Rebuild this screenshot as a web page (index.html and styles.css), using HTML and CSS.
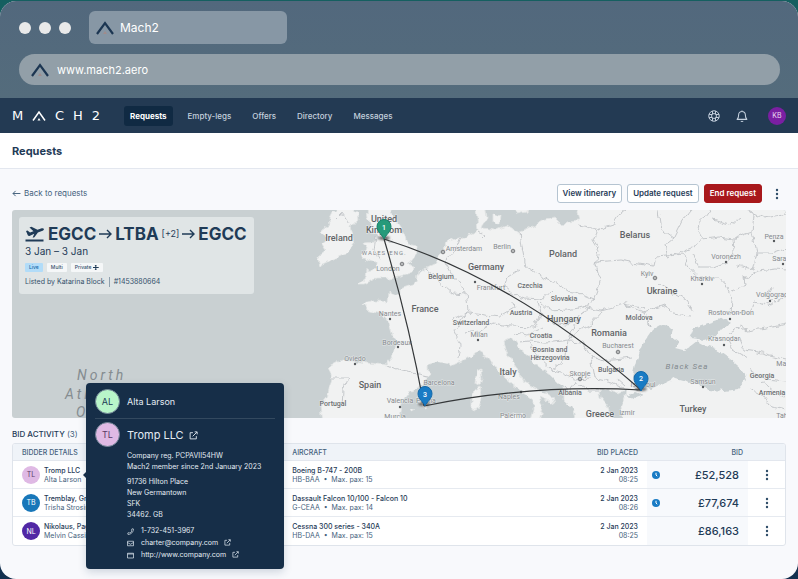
FILE: index.html
```html
<!DOCTYPE html>
<html lang="en">
<head>
<meta charset="utf-8">
<meta name="viewport" content="width=device-width, initial-scale=1">
<title>Mach2 – Requests</title>
<link rel="stylesheet" href="styles.css">
</head>
<body>
<svg class="defs" aria-hidden="true">
  <symbol id="mark" viewBox="0 0 18 14"><path d="M1 13 9 2l8 11" fill="none" stroke="#1c3652" stroke-width="2.2"/><path d="M7 13l2-3 2 3z" fill="#a08c8c"/></symbol>
  <symbol id="external" viewBox="0 0 16 16"><path d="M7 3H2v11h11V9M10 1.500h4.500V6M14 2 6.500 9.500" fill="none" stroke="currentColor" stroke-width="1.600"/></symbol>
  <symbol id="dots" viewBox="0 0 4 14"><circle cx="2" cy="3" r="1.200"/><circle cx="2" cy="7" r="1.200"/><circle cx="2" cy="11" r="1.200"/></symbol>
  <symbol id="clock" viewBox="0 0 16 16"><circle cx="8" cy="8" r="8" fill="#197bc4"/><path d="M8 3.500V8l2.500 2.500" fill="none" stroke="#fff" stroke-width="2"/></symbol>
</svg>
<div class="window">
  <header class="chrome">
    <div class="tabs">
      <div class="lights"><i></i><i></i><i></i></div>
      <div class="tab"><svg><use href="#mark"/></svg><span>Mach2</span></div>
    </div>
    <div class="address"><svg><use href="#mark"/></svg><span>www.mach2.aero</span></div>
  </header>

  <nav class="nav">
    <a class="logo" href="#" aria-label="Mach2"><span>M</span><svg viewBox="0 0 14 10"><path d="M1 9.500 7 1l6 8.500" fill="none" stroke="#fff" stroke-width="1.500"/><path d="M5.500 9.500 7 7l1.500 2.500z" fill="#fff"/></svg><span>C</span><span>H</span><span>2</span></a>
    <div class="links">
      <a class="active" href="#">Requests</a><a href="#">Empty-legs</a><a href="#">Offers</a><a href="#">Directory</a><a href="#">Messages</a>
    </div>
    <div class="tools">
      <button aria-label="Help"><svg viewBox="0 0 16 16"><g fill="none" stroke="currentColor" stroke-width="1.300"><circle cx="8" cy="8" r="7"/><circle cx="8" cy="8" r="3.300"/><path d="M6 1.500v4M10 1.500v4M6 10.500v4M10 10.500v4M1.500 6h4M1.500 10h4M10.500 6h4M10.500 10h4"/></g></svg></button>
      <button aria-label="Notifications"><svg viewBox="0 0 16 16"><g fill="none" stroke="currentColor" stroke-width="1.400" stroke-linejoin="round"><path d="M1.500 12.500C3.500 10.500 3.500 9 3.500 6.500a4.500 4.500 0 0 1 9 0c0 2.500 0 4 2 6zM8 2V.500M6.500 14.500c.500 1 2.500 1 3 0"/></g></svg></button>
      <button class="user">KB</button>
    </div>
  </nav>

  <div class="title"><h1>Requests</h1></div>

  <main>
    <div class="actions">
      <a class="back" href="#"><svg viewBox="0 0 10 8"><path d="M9.500 4H1M4 1 1 4l3 3" fill="none" stroke="currentColor" stroke-width="1.100"/></svg>Back to requests</a>
      <button>View itinerary</button>
      <button>Update request</button>
      <button class="danger">End request</button>
      <button class="more" aria-label="More actions"><svg><use href="#dots"/></svg></button>
    </div>

    <section class="map">
      <svg class="canvas" viewBox="12 210 774 208" role="img" aria-label="Route map">
        <defs>
          <filter id="rough" x="-5%" y="-5%" width="110%" height="110%" color-interpolation-filters="sRGB"><feTurbulence type="fractalNoise" baseFrequency=".13" numOctaves="2" seed="4"/><feDisplacementMap in="SourceGraphic" scale="7" xChannelSelector="R" yChannelSelector="G"/></filter>
          <filter id="smudge"><feGaussianBlur stdDeviation="1.200"/></filter>
          <g id="pin"><path d="M0 0C-1.500-4-7-7-7-12.500a7 7 0 0 1 14 0C7-7 1.500-4 0 0z"/></g>
        </defs>
        <g filter="url(#rough)">
          <g fill="#f1f2f2" stroke="#e2e5e5" stroke-width=".8">
            <path d="M332 212 343 206 357 212 358 219 350 228 354 242 347 254 332 260 320 265 317 257 326 250 322 244 327 240 321 231 330 225 329 218z"/>
            <path d="M366 202 368 218 371 225 366 232 377 234 376 241 364 242 369 249 362 254 364 259 377 263 377 268 367 270 366 277 358 284 363 284 376 278 388 278 400 276 413 272 414 267 407 265 417 253 417 246 407 244 404 233 396 221 390 211 390 202z"/>
            <path d="M475 202 477 218 478 230 471 234 460 238 447 241 443 252 434 264 425 268 416 275 415 283 400 288 400 296 389 292 388 302 376 301 363 304 367 309 381 313 388 322 391 332 396 343 392 358 387 365 376 364 361 362 341 360 328 367 332 378 327 397 321 404 323 425 399 425 402 403 407 393 423 385 429 376 428 366 437 362 451 366 466 359 478 351 488 357 497 370 512 383 523 392 533 400 533 408 529 425 538 425 543 405 540 397 555 404 553 397 540 390 524 382 516 366 506 352 503 341 511 337 518 347 534 362 551 375 563 387 563 399 572 408 578 425 614 425 608 408 600 398 599 392 608 389 618 393 626 390 625 396 621 405 623 425 795 425 795 202 580 202 578 213 580 221 566 222 562 226 554 218 541 221 528 229 518 233 507 226 496 230 482 228 486 218 484 202z"/>
            <path d="M477 371 481 369 482 378 480 386 475 383zM474 390 481 387 483 394 479 407 472 410 472 398zM493 213 500 216 499 224 493 221zM512 202 529 202 526 212 517 214zM411 408 415 410 411 412zM420 400 427 401 425 407 420 405zM502 415 523 413 525 425 504 425z"/>
          </g>
          <g fill="#c9d0d2">
            <path d="M640 387 633 377 637 360 644 343 653 330 660 326 673 329 671 336 679 342 676 349 684 351 697 341 706 346 718 350 729 358 743 370 747 380 739 389 726 391 709 390 694 383 675 378 660 385 650 390z"/>
            <path d="M690 338 694 328 708 323 728 317 731 324 721 329 714 337 705 340zM626 395 634 392 643 396 634 399z"/>
          </g>
          <g fill="none" stroke="#bfc3c6" stroke-width=".9">
            <path d="M335 220 342 213 350 224M376 236 374 250 380 260M385 238 393 242M461 238 456 250 445 262 452 275 460 284 466 293 468 310 461 320 454 330 461 345 459 358M425 268 435 277 445 286 453 293 466 294M388 365 402 371 428 376M332 378 348 378 343 390 342 405M479 231 485 235 482 238M520 232 522 247 526 266 539 275 554 282 567 291 580 293 594 299 601 280 596 265 599 250 593 240 596 228 578 224"/>
            <path d="M520 270 507 278 504 287 515 296 525 299 541 300 552 290M454 320 468 313 485 315 500 317 515 308 514 301M464 333 480 331 493 323 511 326 534 327 541 313 538 303M541 303 550 311 568 310 584 307 594 299M541 313 552 322 565 324 577 321 586 307 602 310 624 304 643 313 651 326M513 333 528 335 542 328M519 342 530 341 546 343 569 340 572 330 577 321M530 343 538 357 552 370 564 360 568 341M568 341 582 342 591 357 604 361 633 358M591 357 595 378 612 382 624 388M552 370 564 373 574 379 591 378M564 387 570 394 575 382 588 391 599 391"/>
            <path d="M597 230 613 225 620 213 628 207M596 262 620 260 654 266 656 257 684 254 687 265 699 278 719 278 727 287 732 299 731 315M659 210 662 230 673 238 664 245 667 258M673 238 682 220 690 210M667 258 692 247 703 239 696 226 706 217 713 207M703 239 720 237 733 239 734 252 727 262 713 267 699 267 692 254M733 239 752 232 754 215 742 207M752 232 757 253 772 253 786 248M757 253 753 270 738 266M745 278 758 271 775 269 786 270M732 291 746 286 745 276M729 313 748 313 756 301 770 306 786 296M713 220 729 225 740 217M751 212 765 218 786 214M729 333 740 326 746 331 766 328 786 323M739 338 744 350 758 352 786 359M643 313 665 305 672 314 690 316M651 326 645 309 624 304M660 285 675 294 686 300 693 310M748 370 765 379 786 381M751 389 765 397 772 407 786 410M641 390 629 387M604 310 590 325 580 330 569 340M617 379 625 386M762 382 774 392 786 398M728 340 733 350 747 358M771 287 767 296 775 303"/>
          </g>
        </g>
        <g class="dots-map">
          <circle cx="390" cy="319" r="1.200"/><circle cx="398" cy="347" r="1.200"/><circle cx="355" cy="364" r="1.200"/><circle cx="400" cy="407" r="1.200"/><circle cx="478" cy="340" r="1.200"/><circle cx="475" cy="282" r="1.200"/><circle cx="726" cy="262" r="1.200"/><circle cx="702" cy="284" r="1.200"/><circle cx="774" cy="241" r="1.200"/><circle cx="783" cy="264" r="1.200"/><circle cx="770" cy="301" r="1.200"/><circle cx="730" cy="319" r="1.200"/><circle cx="724" cy="345" r="1.200"/><circle cx="703" cy="387" r="1.200"/><circle cx="521" cy="392" r="1.200"/>
          <g class="capital"><circle cx="402" cy="264" r="1.800"/><circle cx="443" cy="252" r="1.800"/><circle cx="513" cy="251" r="1.800"/><circle cx="655" cy="278" r="1.800"/><circle cx="618" cy="352" r="1.800"/><circle cx="580" cy="379" r="1.800"/></g>
          <circle cx="402" cy="264" r=".7"/><circle cx="443" cy="252" r=".7"/><circle cx="513" cy="251" r=".7"/><circle cx="655" cy="278" r=".7"/><circle cx="618" cy="352" r=".7"/><circle cx="580" cy="379" r=".7"/>
        </g>
        <g class="country">
          <text x="384" y="222">United</text><text x="384" y="233">Kingdom</text><text x="339" y="241">Ireland</text><text x="486" y="270">Germany</text><text x="563" y="257">Poland</text><text x="635" y="238">Belarus</text><text x="662" y="294">Ukraine</text><text x="425" y="312">France</text><text x="564" y="322">Hungary</text><text x="609" y="336">Romania</text><text x="508" y="375">Italy</text><text x="370" y="388">Spain</text><text x="600" y="417">Greece</text><text x="693" y="412">Turkey</text>
        </g>
        <g class="small-country">
          <text x="441" y="279">Belgium</text><text x="530" y="288">Czechia</text><text x="564" y="301">Slovakia</text><text x="521" y="315">Austria</text><text x="471" y="325">Switzerland</text><text x="541" y="338">Croatia</text><text x="550" y="352">Bosnia and</text><text x="550" y="360">Herzegovina</text><text x="639" y="320">Moldova</text><text x="611" y="372">Bulgaria</text><text x="570" y="395">Albania</text><text x="333" y="406">Portugal</text><text x="762" y="378">Georgia</text><text x="772" y="395">Armenia</text>
        </g>
        <g class="city">
          <text x="388" y="271">London</text><text x="464" y="251">Amsterdam</text><text x="502" y="249">Berlin</text><text x="491" y="290">Frankfurt</text><text x="390" y="316">Nantes</text><text x="397" y="345">Bordeaux</text><text x="355" y="361">Oviedo</text><text x="400" y="403">Valencia</text><text x="426" y="403">Palma</text><text x="439" y="385">Barcelona</text><text x="479" y="337">Milan</text><text x="509" y="399">Naples</text><text x="513" y="418">Palermo</text><text x="395" y="419">Murcia</text><text x="647" y="276">Kyiv</text><text x="702" y="281">Kharkiv</text><text x="726" y="259">Voronezh</text><text x="774" y="239">Penza</text><text x="784" y="261">Saratov</text><text x="772" y="297">Volgograd</text><text x="731" y="315">Rostov-on-Don</text><text x="724" y="341">Krasnodar</text><text x="618" y="348">Bucharest</text><text x="580" y="376">Skopje</text><text x="643" y="387">Istanbul</text><text x="703" y="384">Samsun</text><text x="627" y="415">Izmir</text><text x="785" y="366">Makh</text><text x="782" y="418">Tab</text>
          <text class="region" x="374" y="255">WALES</text><text class="region" x="398" y="255">ENG.</text>
        </g>
        <text class="sea" x="687" y="369">Black Sea</text>
        <g class="ocean"><text x="77" y="380">North</text><text x="65" y="399">Atlantic</text><text x="76" y="417">Ocean</text></g>
        <g fill="#444b" filter="url(#smudge)"><ellipse cx="384" cy="238" rx="6" ry="2"/><ellipse cx="424" cy="404" rx="6" ry="2"/><ellipse cx="641" cy="389" rx="6" ry="2"/></g>
        <path d="M384 239Q409 323 424 406M384 239Q517 281 641 390M424 406Q532 384 641 390" fill="none" stroke="#343739" stroke-width="1.200"/>
        <g class="pins">
          <use href="#pin" x="384" y="239" fill="#269a7a" stroke="#17806a"/><use href="#pin" x="425" y="406" fill="#197bc4" stroke="#1268aa"/><use href="#pin" x="641" y="391" fill="#197bc4" stroke="#1268aa"/>
          <text x="384" y="230">1</text><text x="425" y="397">3</text><text x="641" y="381">2</text>
        </g>
      </svg>
      <div class="itinerary">
        <h2>
          <svg class="plane" viewBox="0 0 19 16"><path d="M.500 13.500h18v2H.500zM1 5l1.500-.500 2.500 2 3.500-1.300L4.500 1.500 6.500.800l6 3 3.500-1.300c1.500-.500 2.700-.300 2.900.500.200.9-.7 1.600-2 2.100l-4 1.500-3.500 4.600-1.800.6 1.700-4L5 9.800c-1 .400-1.700.2-2.200-.5z" fill="#1f3b57"/></svg>
          <span>EGCC</span><svg class="arrow" viewBox="0 0 13 10"><path d="M0 5h12M8 1l4 4-4 4" fill="none" stroke="#1f3b57" stroke-width="1.400"/></svg><span>LTBA</span><small>[+2]</small><svg class="arrow" viewBox="0 0 13 10"><path d="M0 5h12M8 1l4 4-4 4" fill="none" stroke="#1f3b57" stroke-width="1.400"/></svg><span>EGCC</span>
        </h2>
        <p class="dates">3 Jan – 3 Jan</p>
        <p class="tags"><b class="live">Live</b><b>Multi</b><b>Private <svg viewBox="0 0 10 8"><path d="M0 3.200h3.800V1L3 .5V0h3v.500L5.500 1v2.200H9L10 4l-1 .8H5.500V7l.5.500V8H3v-.500L3.800 7V4.800H0z" fill="#1f3b57"/></svg></b></p>
        <p class="listed">Listed by Katarina Block <i></i> #1453880664</p>
      </div>
    </section>

    <section class="bids">
      <h3>BID ACTIVITY <span>(3)</span></h3>
      <table>
        <colgroup><col class="c-bidder"><col><col class="c-placed"><col class="c-bid"><col class="c-more"></colgroup>
        <thead><tr><th>BIDDER DETAILS</th><th>AIRCRAFT</th><th class="right">BID PLACED</th><th class="right">BID</th><th></th></tr></thead>
        <tbody>
          <tr><td><div class="bidder"><i class="avatar pink">TL</i><p><b>Tromp LLC</b>Alta Larson</p></div></td><td><p><b>Boeing B-747 - 200B</b>HB-BAA &nbsp;•&nbsp; Max. pax: 15</p></td><td class="right"><p><b>2 Jan 2023</b>08:25</p></td><td class="bid"><div><svg><use href="#clock"/></svg><span>£52,528</span></div></td><td class="menu"><button aria-label="Bid actions"><svg><use href="#dots"/></svg></button></td></tr>
          <tr><td><div class="bidder"><i class="avatar blue">TB</i><p><b>Tremblay, Grimes</b>Trisha Strosin</p></div></td><td><p><b>Dassault Falcon 10/100 - Falcon 10</b>G-CEAA &nbsp;•&nbsp; Max. pax: 14</p></td><td class="right"><p><b>2 Jan 2023</b>08:26</p></td><td class="bid"><div><svg><use href="#clock"/></svg><span>£77,674</span></div></td><td class="menu"><button aria-label="Bid actions"><svg><use href="#dots"/></svg></button></td></tr>
          <tr><td><div class="bidder"><i class="avatar purple">NL</i><p><b>Nikolaus, Pagac</b>Melvin Cassin</p></div></td><td><p><b>Cessna 300 series - 340A</b>HB-DAA &nbsp;•&nbsp; Max. pax: 15</p></td><td class="right"><p><b>2 Jan 2023</b>08:25</p></td><td class="bid"><div><span>£86,163</span></div></td><td class="menu"><button aria-label="Bid actions"><svg><use href="#dots"/></svg></button></td></tr>
        </tbody>
      </table>

      <aside class="card">
        <div class="person"><i class="avatar big green">AL</i><span>Alta Larson</span></div>
        <div class="company"><i class="avatar big pink">TL</i><a href="#">Tromp LLC <svg><use href="#external"/></svg></a></div>
        <div class="details">
          <p>Company reg. PCPAVII54HW<br>Mach2 member since 2nd January 2023</p>
          <p>91736 Hilton Place<br>New Germantown<br>SFK<br>34462. GB</p>
          <ul>
            <li><svg viewBox="0 0 14 14"><path d="M10 1.500 13 2c0 6-5 11-11 11l-.500-3 3-1 1.200 1.200A9 9 0 0 0 9.800 6L8.800 4.500z" fill="none" stroke="currentColor" stroke-width="1.300"/></svg>1-732-451-3967</li>
            <li><svg viewBox="0 0 14 14"><path d="M1 2.500h12v9H1zM1 5l6 3.500L13 5" fill="none" stroke="currentColor" stroke-width="1.400"/></svg><a href="#">charter@company.com <svg><use href="#external"/></svg></a></li>
            <li><svg viewBox="0 0 14 14"><path d="M1 2.500h12v9.500H1zM1 4h12" fill="none" stroke="currentColor" stroke-width="1.400"/></svg><a href="#">http://www.company.com <svg><use href="#external"/></svg></a></li>
          </ul>
        </div>
      </aside>
    </section>
  </main>
</div>
</body>
</html>
```
FILE: styles.css
```css
* { box-sizing: border-box; }
body { margin: 0; padding-top: 1px; background: linear-gradient(#155f60 50%, #12304f 50%); font-family: Inter, "Liberation Sans", sans-serif; font-size: 8px; line-height: 9px; color: #44617c; }
h1, h2, h3, p, ul { margin: 0; padding: 0; }
a { color: inherit; text-decoration: none; }
button { font: inherit; color: inherit; background: none; border: 0; padding: 0; margin: 0; display: flex; align-items: center; justify-content: center; }
i { font-style: normal; }
.defs { position: absolute; width: 0; height: 0; }
.window { min-height: calc(100vh - 1px); background: #f8f9fc; border-radius: 16px; overflow: hidden; }

.chrome { padding: 10px 18px 13px 19px; background: linear-gradient(#52687d, #546c7c); color: #fff; display: flex; flex-direction: column; gap: 10px; }
.tabs { display: flex; align-items: center; gap: 18px; }
.lights { display: flex; gap: 8px; }
.lights i { width: 12px; height: 12px; border-radius: 50%; background: #e9e9e9; }
.tab { display: flex; align-items: center; gap: 6px; width: 198px; height: 33px; padding: 0 7px; border-radius: 6px; background: #8797a5; font-size: 12px; line-height: 16px; }
.tab svg, .address svg { width: 18px; height: 14px; }
.address { display: flex; align-items: center; gap: 8px; height: 31px; padding: 0 12px; border-radius: 16px; background: #929fa8; font-size: 11px; line-height: 14px; }

.nav { height: 35px; display: flex; align-items: center; padding: 0 12px; background: #233a53; color: #c5d1de; }
.logo { width: 88px; display: flex; justify-content: space-between; align-items: center; color: #fff; font: 13px/14px "DejaVu Sans", sans-serif; }
.logo svg { width: 14px; height: 10px; }
.links { display: flex; margin-left: 24px; gap: 9px; font-weight: 500; }
.links a { padding: 5px 6px; border-radius: 3px; line-height: 10px; }
.links .active { background: #102a43; color: #fff; font-weight: 700; }
.tools { margin-left: auto; display: flex; align-items: center; gap: 16px; }
.tools svg { width: 12px; height: 12px; }
.tools .user { width: 18px; height: 18px; margin-left: 4px; border-radius: 50%; background: #7a1fa2; color: #eadcf2; font-size: 7px; }

.title { height: 36px; display: flex; align-items: center; padding: 0 12px; background: #fff; border-bottom: 1px solid #e3e7ef; }
.title h1 { font-size: 11px; line-height: 14px; font-weight: 700; color: #1f3b57; }

main { padding: 15px 12px 32px; }
.actions { display: flex; align-items: center; gap: 5px; margin-bottom: 7px; }
.back { margin-right: auto; display: flex; align-items: center; gap: 3px; }
.back svg { width: 9px; height: 7px; }
.actions button { height: 19px; padding: 0 5px; border: 1px solid #b5c4d1; border-radius: 3px; background: #fff; color: #1f3b57; font-weight: 600; }
.actions .danger { background: #a8181c; border-color: #a8181c; color: #fff; }
.actions .more { width: 19px; padding: 0; border: 0; background: none; }
.more svg, .menu svg { width: 4px; height: 14px; fill: #2f4d69; }

.map { position: relative; border-radius: 3px; overflow: hidden; background: #c9d0d2; }
.canvas { display: block; width: 100%; height: auto; font-family: Roboto, sans-serif; text-anchor: middle; }
.canvas text { paint-order: stroke; stroke: #f3f4f4aa; stroke-width: 1px; }
.country { font-size: 9px; font-weight: 500; fill: #5f6366; }
.small-country { font-size: 7px; font-weight: 500; fill: #6a6e71; }
.city { font-size: 7px; fill: #85898d; }
.canvas .region { font-size: 6px; letter-spacing: 1px; }
.dots-map { fill: #55595c; }
.capital { fill: #eee; stroke: #77797c; stroke-width: 1px; }
.canvas .sea { font-size: 8px; font-style: italic; letter-spacing: 1px; fill: #82898e; stroke: none; }
.ocean { font-size: 14px; font-style: italic; letter-spacing: 3px; fill: #858c90; text-anchor: start; }
.canvas .ocean text { stroke: none; }
.pins { fill: #fff; font-size: 7px; font-weight: 500; }
.canvas .pins text { stroke: none; }

.itinerary { position: absolute; top: 7px; left: 7px; padding: 7px 7px 7px 6px; border-radius: 3px; background: #e0e5e6; color: #34506b; }
.itinerary h2 { display: flex; align-items: center; gap: 3px; font-size: 17px; line-height: 20px; font-weight: 700; color: #1f3b57; }
.itinerary small { font-size: 9px; font-weight: 400; }
.plane { width: 19px; height: 16px; margin-right: 1px; }
.arrow { width: 13px; height: 10px; }
.dates { font-size: 10px; line-height: 15px; color: #1f3b57; }
.tags { display: flex; gap: 4px; margin: 4px 0 5px; }
.tags b { display: flex; align-items: center; gap: 2px; padding: 0 4px; font-size: 5px; line-height: 9px; font-weight: 500; background: #f5f7f8; border-radius: 1px; }
.tags .live { background: #b2dcf8; color: #1268aa; }
.tags svg { width: 6px; height: 5px; }
.listed { display: flex; gap: 4px; font-size: 7px; line-height: 10px; }
.listed i { width: 1px; background: #8fa0ae; }

.bids { position: relative; padding-top: 11px; font-size: 7px; }
.bids h3 { font-size: 8px; line-height: 10px; margin-bottom: 4px; color: #1f3b57; font-weight: 500; }
.bids h3 span { font-weight: 400; color: #44617c; }
table { width: 100%; table-layout: fixed; border-collapse: separate; border-spacing: 0; background: #fff; border: 1px solid #dfe4eb; border-radius: 3px; overflow: hidden; font-size: 7px; }
.c-bidder { width: 35%; }
.c-placed { width: 112px; }
.c-bid { width: 101px; }
.c-more { width: 37px; }
th { height: 17px; padding: 0 9px; background: #eff3f8; text-align: left; font-weight: 500; color: #44617c; border-bottom: 1px solid #e3e7ee; }
td { height: 28px; padding: 0 9px; border-bottom: 1px solid #e6eaf0; }
tr:last-child td { border-bottom: 0; }
th.right, td.right { text-align: right; }
th.right:nth-child(4) { padding-right: 5px; }
td b { display: block; font-weight: 500; color: #1f3b57; }
.bidder { display: flex; align-items: center; gap: 4px; }
.avatar { width: 18px; height: 18px; flex: none; border-radius: 50%; display: flex; align-items: center; justify-content: center; font-size: 7px; color: #fff; }
.avatar.pink { background: #dfb9e4; color: #593b66; }
.avatar.blue { background: #1877b9; }
.avatar.purple { background: #5128a5; }
.avatar.green { background: #b8f5c9; color: #1f3b57; }
.avatar.big { width: 25px; height: 25px; font-size: 9px; border: 1px solid #6f8294; }
td.bid { background: #f7f9fc; color: #1f3b57; font-size: 11px; line-height: 14px; font-weight: 500; }
.bid div { display: flex; align-items: center; justify-content: flex-end; }
.bid svg { width: 8px; height: 8px; margin-right: auto; margin-left: -4px; }
.menu button { width: 100%; }

.card { position: absolute; top: -35px; left: 74px; width: 198px; padding: 6px 9px 8px; border-radius: 4px; background: #162e48; color: #e3ebf3; box-shadow: 0 3px 8px #1231522e; }
.card::before { content: ""; position: absolute; left: -3px; top: 88px; border: 4px solid transparent; border-right-color: #162e48; border-left: 0; }
.person, .company { display: flex; align-items: center; gap: 7px; }
.person { padding-bottom: 4px; border-bottom: 1px solid #33495f; font-size: 9px; }
.company { padding-top: 3px; font-size: 11px; line-height: 16px; }
.company svg { width: 9px; height: 9px; margin-left: 2px; vertical-align: -1px; }
.details { padding: 3px 0 0 32px; line-height: 11px; }
.details p { margin-bottom: 4px; }
.details ul { list-style: none; line-height: 12px; margin-top: 5px; }
.details li { display: flex; align-items: center; gap: 7px; }
.details li svg { width: 7px; height: 7px; }
.details a svg { margin-left: 4px; vertical-align: -1px; }
```
